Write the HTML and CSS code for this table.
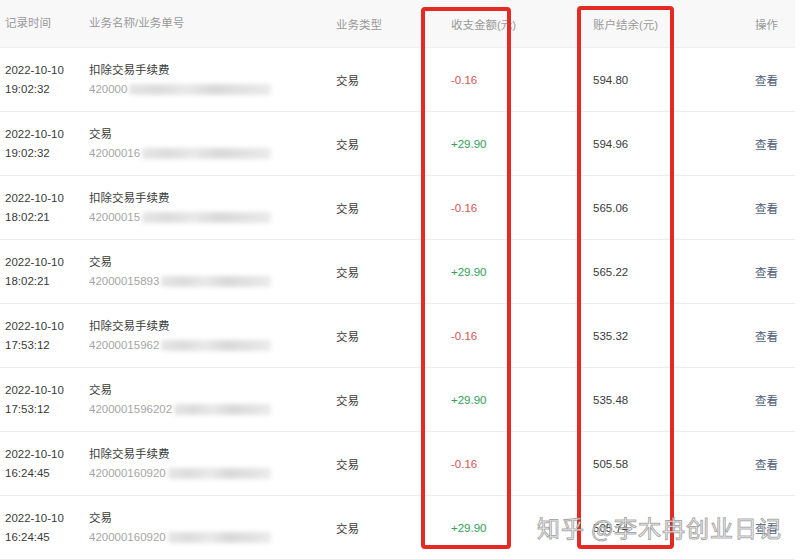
FILE: index.html
```html
<!DOCTYPE html>
<html lang="zh">
<head>
<meta charset="utf-8">
<link rel="stylesheet" href="styles.css">
</head>
<body>
<div class="page">
  <div class="table">
    <div class="row head">
      <div class="c c1">记录时间</div>
      <div class="c c2">业务名称/业务单号</div>
      <div class="c c3">业务类型</div>
      <div class="c c4">收支金额(元)</div>
      <div class="c c5">账户结余(元)</div>
      <div class="c c6">操作</div>
    </div>
    <div class="row">
      <div class="c c1"><div>2022-10-10</div><div>19:02:32</div></div>
      <div class="c c2"><div class="name">扣除交易手续费</div><div class="no"><span>420000</span><span class="blur"></span></div></div>
      <div class="c c3">交易</div>
      <div class="c c4 neg">-0.16</div>
      <div class="c c5">594.80</div>
      <div class="c c6"><span class="link">查看</span></div>
    </div>
    <div class="row">
      <div class="c c1"><div>2022-10-10</div><div>19:02:32</div></div>
      <div class="c c2"><div class="name">交易</div><div class="no"><span>42000016</span><span class="blur"></span></div></div>
      <div class="c c3">交易</div>
      <div class="c c4 pos">+29.90</div>
      <div class="c c5">594.96</div>
      <div class="c c6"><span class="link">查看</span></div>
    </div>
    <div class="row">
      <div class="c c1"><div>2022-10-10</div><div>18:02:21</div></div>
      <div class="c c2"><div class="name">扣除交易手续费</div><div class="no"><span>42000015</span><span class="blur"></span></div></div>
      <div class="c c3">交易</div>
      <div class="c c4 neg">-0.16</div>
      <div class="c c5">565.06</div>
      <div class="c c6"><span class="link">查看</span></div>
    </div>
    <div class="row">
      <div class="c c1"><div>2022-10-10</div><div>18:02:21</div></div>
      <div class="c c2"><div class="name">交易</div><div class="no"><span>42000015893</span><span class="blur"></span></div></div>
      <div class="c c3">交易</div>
      <div class="c c4 pos">+29.90</div>
      <div class="c c5">565.22</div>
      <div class="c c6"><span class="link">查看</span></div>
    </div>
    <div class="row">
      <div class="c c1"><div>2022-10-10</div><div>17:53:12</div></div>
      <div class="c c2"><div class="name">扣除交易手续费</div><div class="no"><span>42000015962</span><span class="blur"></span></div></div>
      <div class="c c3">交易</div>
      <div class="c c4 neg">-0.16</div>
      <div class="c c5">535.32</div>
      <div class="c c6"><span class="link">查看</span></div>
    </div>
    <div class="row">
      <div class="c c1"><div>2022-10-10</div><div>17:53:12</div></div>
      <div class="c c2"><div class="name">交易</div><div class="no"><span>4200001596202</span><span class="blur"></span></div></div>
      <div class="c c3">交易</div>
      <div class="c c4 pos">+29.90</div>
      <div class="c c5">535.48</div>
      <div class="c c6"><span class="link">查看</span></div>
    </div>
    <div class="row">
      <div class="c c1"><div>2022-10-10</div><div>16:24:45</div></div>
      <div class="c c2"><div class="name">扣除交易手续费</div><div class="no"><span>420000160920</span><span class="blur"></span></div></div>
      <div class="c c3">交易</div>
      <div class="c c4 neg">-0.16</div>
      <div class="c c5">505.58</div>
      <div class="c c6"><span class="link">查看</span></div>
    </div>
    <div class="row">
      <div class="c c1"><div>2022-10-10</div><div>16:24:45</div></div>
      <div class="c c2"><div class="name">交易</div><div class="no"><span>420000160920</span><span class="blur"></span></div></div>
      <div class="c c3">交易</div>
      <div class="c c4 pos">+29.90</div>
      <div class="c c5">505.74</div>
      <div class="c c6"><span class="link">查看</span></div>
    </div>
  </div>
  <div class="mark mark1"></div>
  <div class="mark mark2"></div>
  <div class="watermark">知乎 @李木冉创业日记</div>
</div>
</body>
</html>
```
FILE: styles.css
```css
html, body {
  margin: 0;
  padding: 0;
  background: #fff;
}
body {
  font-family: "Liberation Sans", Arial, "Noto Sans CJK SC", sans-serif;
  font-size: 11.5px;
  color: #3a3a3a;
}
.page {
  position: relative;
  width: 800px;
  height: 560px;
  overflow: hidden;
}
.table {
  width: 795px;
}
.row {
  display: grid;
  grid-template-columns: 89px 247px 115px 142px 1fr 70px;
  height: 63px;
  border-bottom: 1px solid #ebedf0;
  align-items: center;
}
.row.head {
  height: 47px;
  background: #f8f8f9;
  color: #9a9a9a;
  border-bottom: 1px solid #eeeff1;
}
.c1 {
  padding-left: 5px;
  line-height: 19px;
}
.c2 {
  line-height: 19px;
}
.c6 {
  text-align: right;
  padding-right: 17px;
}
.name {
  color: #3a3a3a;
}
.no {
  display: flex;
  width: 182px;
  color: #a5a5a5;
  align-items: center;
}
.blur {
  flex: 1;
  height: 11px;
  margin-left: 2px;
  background: linear-gradient(90deg, #e6e6e6 0%, #dcdcdc 20%, #e9e9e9 40%, #d9d9d9 60%, #e2e2e2 80%, #ebebeb 100%);
  filter: blur(2px);
}
.neg {
  color: #d9534f;
}
.pos {
  color: #2e9e57;
}
.link {
  color: #4a5a7a;
}
.mark {
  position: absolute;
  border: 4px solid #e42a22;
  border-radius: 4px;
  box-sizing: border-box;
}
.mark1 {
  left: 421px;
  top: 7px;
  width: 90px;
  height: 542px;
}
.mark2 {
  left: 577px;
  top: 6px;
  width: 97px;
  height: 543px;
}
.watermark {
  position: absolute;
  left: 537px;
  top: 512px;
  font-family: "Noto Sans CJK SC", sans-serif;
  font-size: 23px;
  line-height: 30px;
  letter-spacing: 1px;
  color: rgba(255, 255, 255, 0.85);
  -webkit-text-stroke: 1px rgba(110, 110, 110, 0.6);
  white-space: nowrap;
}
```
